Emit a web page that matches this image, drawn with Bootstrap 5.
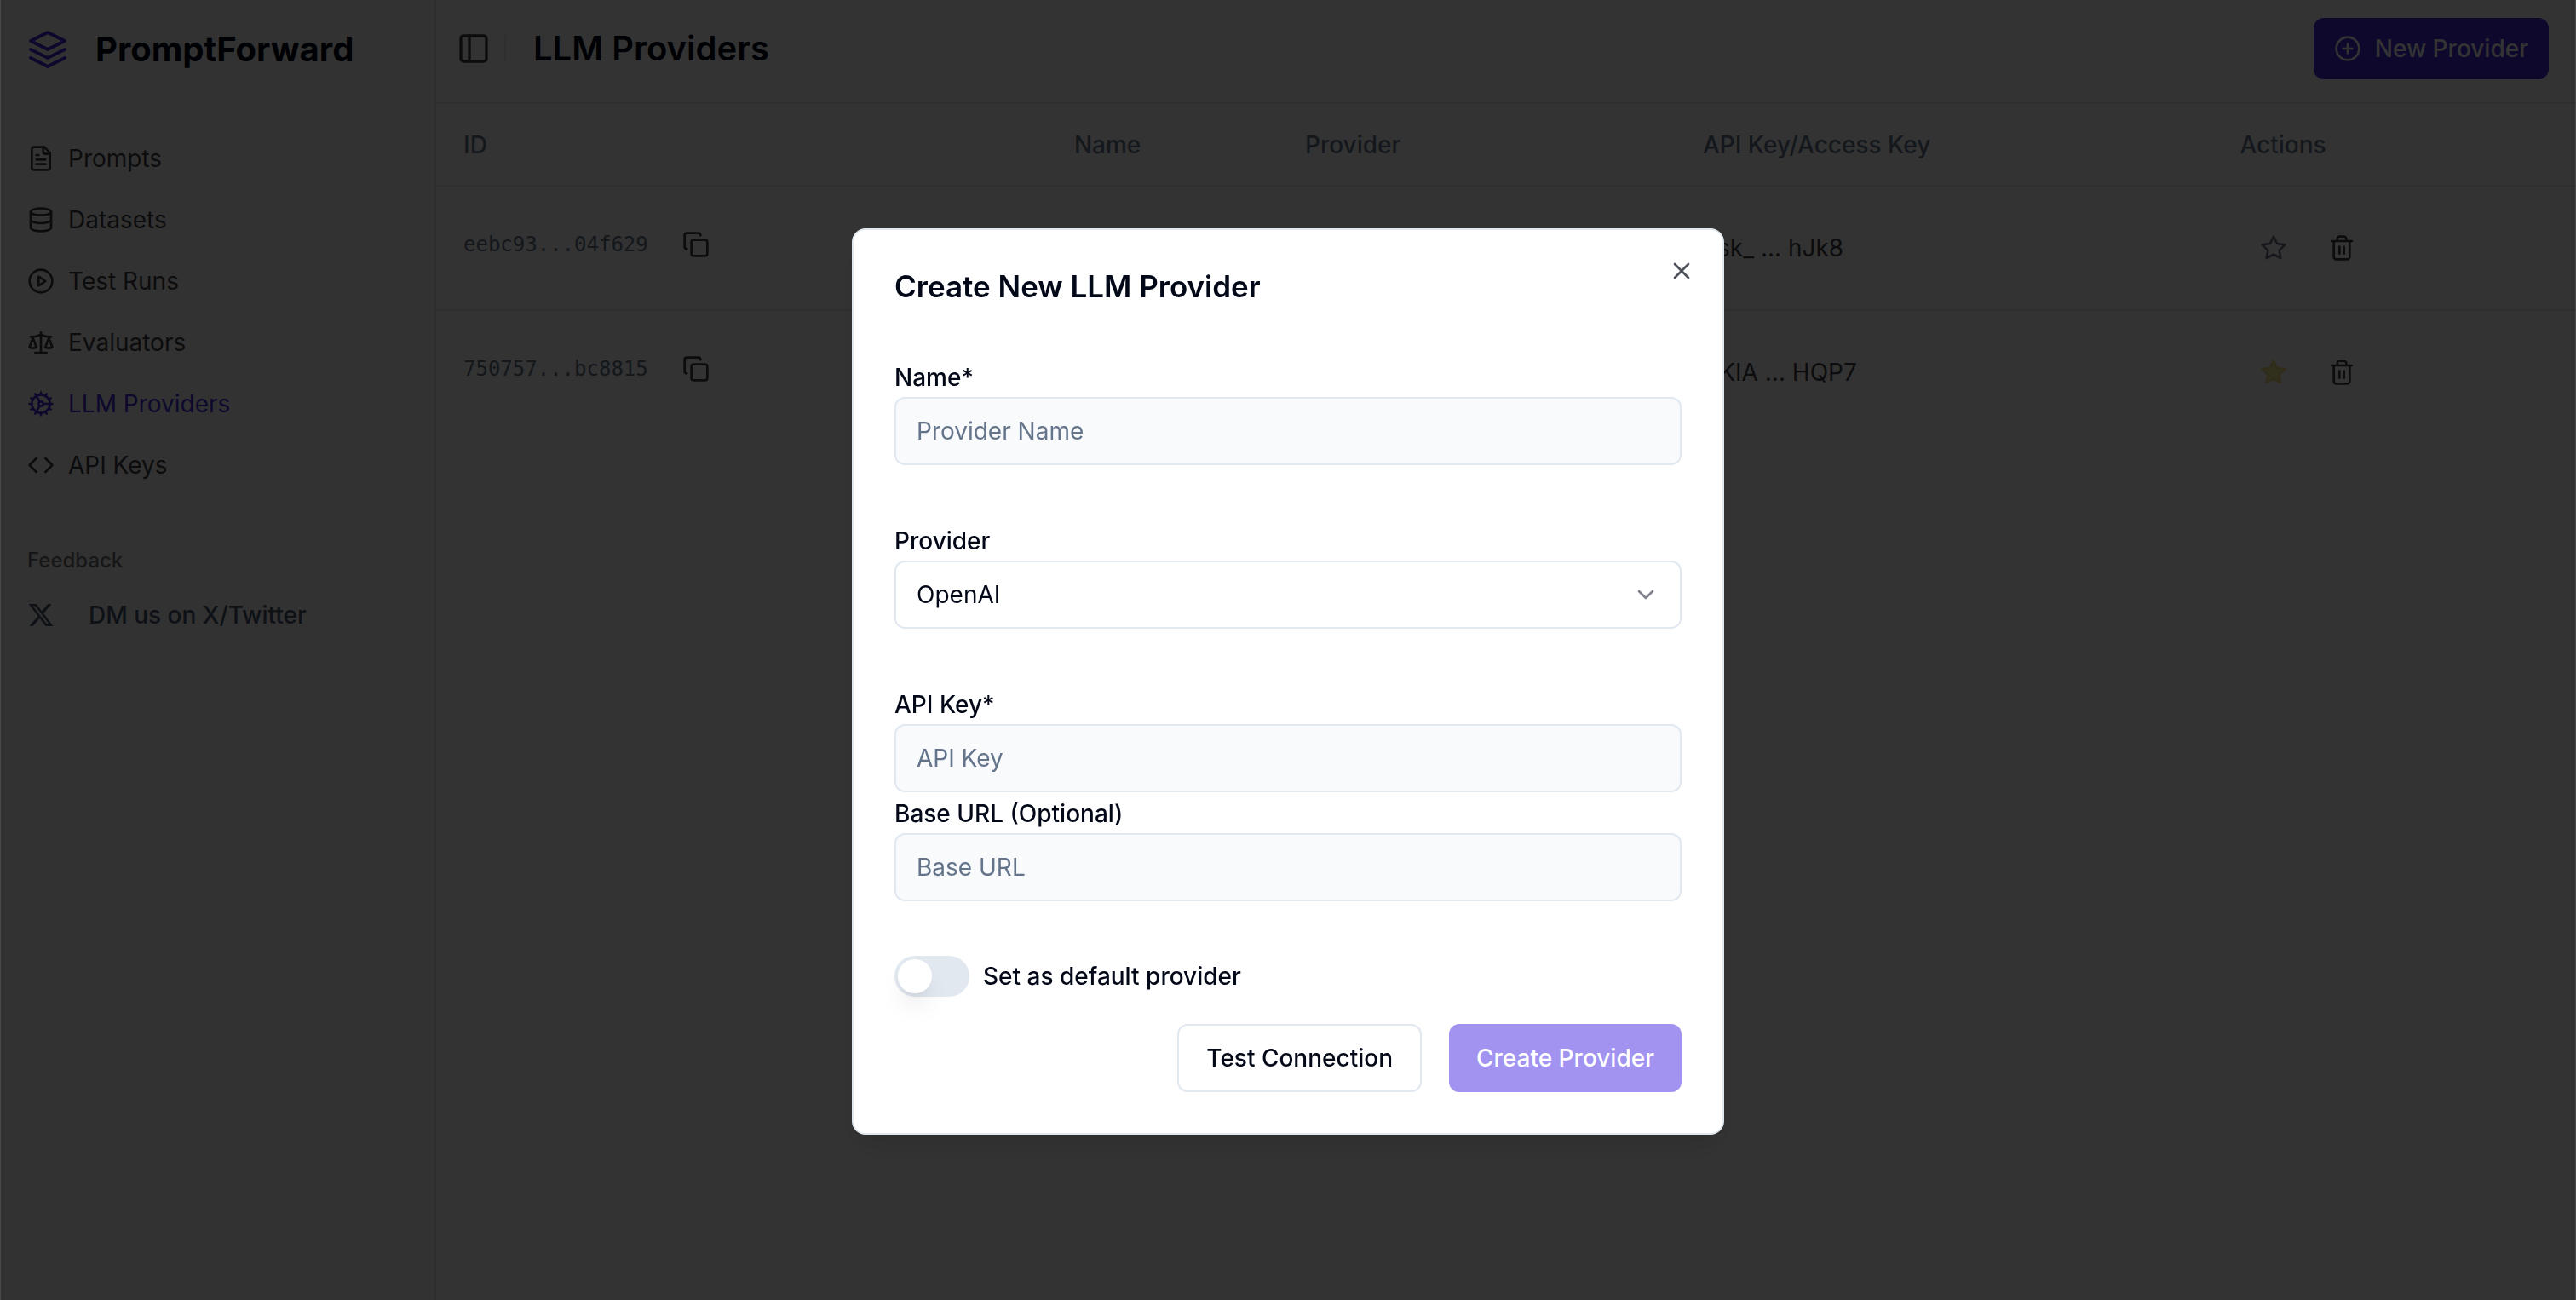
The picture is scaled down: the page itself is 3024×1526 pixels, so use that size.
<!DOCTYPE html>
<html lang="en">
<head>
<meta charset="utf-8">
<meta name="viewport" content="width=device-width, initial-scale=1">
<title>PromptForward – LLM Providers</title>
<link href="https://cdn.jsdelivr.net/npm/bootstrap@5.3.0/dist/css/bootstrap.min.css" rel="stylesheet">
<style>
  :root {
    --brand: #4529df;
    --ink: #020817;
    --muted: #64748b;
    --line: #e2e8f0;
    --side-ink: #3f3f46;
  }
  body { font-family: Inter, "Liberation Sans", sans-serif; font-size: 28px; line-height: 40px; color: var(--ink); background: #fff; }
  .ico { width: 32px; height: 32px; flex: none; fill: none; stroke: currentColor; stroke-width: 2; stroke-linecap: round; stroke-linejoin: round; }
  .ico-lg { width: 40px; height: 40px; }
  .ico-xl { width: 48px; height: 48px; }

  .app-side { width: 512px; background: #fafafa; border-right: 2px solid #e5e7eb; color: var(--side-ink); }
  .brand-row { height: 114px; padding: 2px 32px 0; gap: 32px; color: var(--brand); text-decoration: none; }
  .brand-name { font-size: 40px; font-weight: 700; color: var(--ink); }
  .side-nav { padding: 36px 0 0; }
  .side-nav .nav-link { height: 72px; padding: 0 32px; gap: 16px; color: var(--side-ink); }
  .side-nav .nav-link.active { color: var(--brand); }
  .side-caption { font-size: 24px; font-weight: 500; line-height: 32px; padding: 60px 32px 0; margin: 0; opacity: .7; }
  .side-nav-x { padding: 12px 0 0; }
  .side-nav-x .nav-link { height: 72px; padding: 0 32px; gap: 40px; font-weight: 500; color: #475569; }

  .top-bar { height: 122px; padding: 0 32px 6px 16px; border-bottom: 2px solid var(--line); }
  .top-bar .rule-v { width: 2px; height: 32px; background: var(--line); margin: 0 32px 0 8px; }
  .page-title { font-size: 40px; font-weight: 600; line-height: 48px; margin: 0; }
  .icon-btn { border: 0; background: none; display: inline-flex; align-items: center; justify-content: center; padding: 0; width: 80px; height: 80px; color: var(--side-ink); }
  .icon-btn.toggler { width: 56px; height: 56px; }
  .btn { font-size: 28px; font-weight: 500; line-height: 40px; border-radius: 12px; border-width: 2px; }
  .btn-new { height: 72px; padding: 0 22px; gap: 16px; }
  .btn-brand, .btn-brand:hover, .btn-brand:disabled { color: #fff; background: var(--brand); border-color: var(--brand); }
  .btn-brand:disabled { opacity: .5; }
  .btn-plain { color: var(--ink); background: #fff; border-color: var(--line); }
  .btn-form { height: 80px; padding: 0 32px; }
  .btn-form.btn-brand { padding: 0 30px; }

  .prov-table { table-layout: fixed; margin: 0; color: var(--side-ink); --bs-table-bg: transparent; }
  .prov-table th { height: 96px; padding: 0 32px; font-weight: 500; color: var(--muted); vertical-align: middle; border-bottom: 2px solid var(--line); }
  .prov-table td { height: 146px; padding: 0 32px; vertical-align: middle; color: var(--side-ink); border-bottom: 2px solid var(--line); }
  .prov-table tbody tr:last-child td { border-bottom-color: transparent; }
  .prov-table td.cell-id { padding-bottom: 8px; }
  .col-id { width: 28.54%; }
  .col-name { width: 10.79%; }
  .col-kind { width: 18.59%; }
  .col-key { width: 25.1%; }
  .id-text { font-family: "DejaVu Sans Mono", monospace; font-size: 24px; color: var(--muted); }
  .star-off { color: #6b7280; }
  .star-on { color: #eab308; opacity: .5; }
  .star-on .ico { fill: #e6e028; }

  .shade { position: fixed; inset: 0; background: rgba(0, 0, 0, .8); border: solid rgba(255, 255, 255, .1); border-width: 0 1px; }
  .dlg { position: relative; width: 1024px; max-width: 100%; margin: 268px auto 0; padding: 48px; background: #fff; border: 2px solid var(--line); border-radius: 16px; box-shadow: 0 20px 30px -6px rgba(0,0,0,.1), 0 8px 12px -8px rgba(0,0,0,.1); }
  .dlg-title { font-size: 35px; font-weight: 600; line-height: 36px; margin: 0; }
  .dlg-close { position: absolute; top: 32px; right: 32px; width: 32px; height: 32px; color: var(--ink); opacity: .7; }
  .dlg-group { padding-top: 64px; }
  .dlg-label { display: block; font-weight: 500; line-height: 46px; padding-top: 2px; margin: 0; }
  .switch-label { font-weight: 500; line-height: 48px; margin: 0; }
  .dlg .form-control, .dlg .form-select { height: 80px; padding: 0 24px; font-size: 28px; line-height: 40px; color: var(--ink); border: 2px solid var(--line); border-radius: 12px; background-color: #f8fafc; }
  .dlg .form-control::placeholder { color: var(--muted); opacity: 1; }
  .dlg .form-select { background: #fff url("data:image/svg+xml,%3Csvg xmlns='http://www.w3.org/2000/svg' viewBox='0 0 24 24' fill='none' stroke='%23020817' stroke-opacity='.5' stroke-width='2' stroke-linecap='round' stroke-linejoin='round'%3E%3Cpath d='m6 9 6 6 6-6'/%3E%3C/svg%3E") no-repeat right 24px center / 32px 32px; }
  .toggle-input { appearance: none; flex: none; width: 88px; height: 48px; margin: 0; padding: 4px; border-radius: 24px; background: var(--line); }
  .toggle-input::before { content: ""; display: block; width: 40px; height: 40px; border-radius: 50%; background: #fff; box-shadow: 0 20px 30px -6px rgba(0,0,0,.1), 0 8px 12px -8px rgba(0,0,0,.1); }
  .toggle-input:checked { background: var(--brand); }
  .toggle-input:checked::before { margin-left: 40px; }
  .dlg-actions { gap: 32px; padding-top: 32px; }
</style>
</head>
<body>
<div class="d-flex min-vh-100">
  <aside class="app-side flex-shrink-0">
    <a class="brand-row d-flex align-items-center" href="#">
      <svg class="ico ico-xl" viewBox="0 0 24 24"><path d="M12 2 2 7l10 5 10-5-10-5Z"/><path d="m2 12 10 5 10-5"/><path d="m2 17 10 5 10-5"/></svg>
      <span class="brand-name">PromptForward</span>
    </a>
    <nav class="side-nav nav flex-column">
      <a class="nav-link d-flex align-items-center" href="#"><svg class="ico" viewBox="0 0 24 24"><path d="M15 2H6a2 2 0 0 0-2 2v16a2 2 0 0 0 2 2h12a2 2 0 0 0 2-2V7Z"/><path d="M14 2v4a2 2 0 0 0 2 2h4M10 9H8M16 13H8M16 17H8"/></svg>Prompts</a>
      <a class="nav-link d-flex align-items-center" href="#"><svg class="ico" viewBox="0 0 24 24"><ellipse cx="12" cy="5" rx="9" ry="3"/><path d="M3 5v14a9 3 0 0 0 18 0V5"/><path d="M3 12a9 3 0 0 0 18 0"/></svg>Datasets</a>
      <a class="nav-link d-flex align-items-center" href="#"><svg class="ico" viewBox="0 0 24 24"><circle cx="12" cy="12" r="10"/><path d="m10 8 6 4-6 4Z"/></svg>Test Runs</a>
      <a class="nav-link d-flex align-items-center" href="#"><svg class="ico" viewBox="0 0 24 24"><path d="m16 16 3-8 3 8c-.87.65-1.92 1-3 1s-2.13-.35-3-1Z"/><path d="m2 16 3-8 3 8c-.87.65-1.92 1-3 1s-2.13-.35-3-1Z"/><path d="M7 21h10M12 3v18M3 7h2c2 0 5-1 7-2 2 1 5 2 7 2h2"/></svg>Evaluators</a>
      <a class="nav-link active d-flex align-items-center" href="#"><svg class="ico" viewBox="0 0 24 24"><path d="M12 20a8 8 0 1 0 0-16 8 8 0 0 0 0 16Z"/><path d="M12 14a2 2 0 1 0 0-4 2 2 0 0 0 0 4Z"/><path d="M12 2v2M12 22v-2M17 20.66l-1-1.73M11 10.27 7 3.34M20.66 17l-1.73-1M3.34 7l1.73 1M14 12h8M2 12h2M20.66 7l-1.73 1M3.34 17l1.73-1M17 3.34l-1 1.73M11 13.73l-4 6.93"/></svg>LLM Providers</a>
      <a class="nav-link d-flex align-items-center" href="#"><svg class="ico" viewBox="0 0 24 24"><path d="m16 18 6-6-6-6M8 6l-6 6 6 6"/></svg>API Keys</a>
    </nav>
    <p class="side-caption">Feedback</p>
    <nav class="side-nav-x nav flex-column">
      <a class="nav-link d-flex align-items-center" href="#"><svg class="ico" viewBox="0 0 24 24"><path fill="currentColor" stroke="none" d="M18.244 2.25h3.308l-7.227 8.26 8.502 11.24H16.17l-5.214-6.817L4.99 21.75H1.68l7.73-8.835L1.254 2.25H8.08l4.713 6.231zm-1.161 17.52h1.833L7.084 4.126H5.117z"/></svg>DM us on X/Twitter</a>
    </nav>
  </aside>

  <main class="flex-grow-1">
    <header class="top-bar d-flex align-items-center">
      <button class="icon-btn toggler" type="button" aria-label="Toggle sidebar"><svg class="ico ico-lg" viewBox="0 0 24 24"><rect x="3" y="3" width="18" height="18" rx="2"/><path d="M9 3v18"/></svg></button>
      <span class="rule-v"></span>
      <h1 class="page-title">LLM Providers</h1>
      <button class="btn btn-brand btn-new d-flex align-items-center ms-auto" type="button"><svg class="ico" viewBox="0 0 24 24"><circle cx="12" cy="12" r="10"/><path d="M8 12h8M12 8v8"/></svg>New Provider</button>
    </header>
    <table class="table prov-table">
      <colgroup><col class="col-id"><col class="col-name"><col class="col-kind"><col class="col-key"><col></colgroup>
      <thead><tr><th scope="col">ID</th><th scope="col">Name</th><th scope="col">Provider</th><th scope="col">API Key/Access Key</th><th scope="col">Actions</th></tr></thead>
      <tbody>
        <tr>
          <td class="cell-id"><div class="d-flex align-items-center gap-3"><span class="id-text">eebc93...04f629</span><button class="icon-btn" type="button" aria-label="Copy ID"><svg class="ico" viewBox="0 0 24 24"><rect x="8" y="8" width="14" height="14" rx="2"/><path d="M4 16c-1.1 0-2-.9-2-2V4c0-1.1.9-2 2-2h10c1.1 0 2 .9 2 2"/></svg></button></div></td>
          <td></td><td></td>
          <td>gsk_ ... hJk8</td>
          <td><div class="d-flex"><button class="icon-btn star-off" type="button" aria-label="Make default"><svg class="ico" viewBox="0 0 24 24"><path d="m12 2 3.09 6.26L22 9.27l-5 4.87 1.18 6.88L12 17.77l-6.18 3.25L7 14.14 2 9.27l6.91-1.01Z"/></svg></button><button class="icon-btn" type="button" aria-label="Delete"><svg class="ico" viewBox="0 0 24 24"><path d="M3 6h18M19 6v14c0 1-1 2-2 2H7c-1 0-2-1-2-2V6M8 6V4c0-1 1-2 2-2h4c1 0 2 1 2 2v2M10 11v6M14 11v6"/></svg></button></div></td>
        </tr>
        <tr>
          <td class="cell-id"><div class="d-flex align-items-center gap-3"><span class="id-text">750757...bc8815</span><button class="icon-btn" type="button" aria-label="Copy ID"><svg class="ico" viewBox="0 0 24 24"><rect x="8" y="8" width="14" height="14" rx="2"/><path d="M4 16c-1.1 0-2-.9-2-2V4c0-1.1.9-2 2-2h10c1.1 0 2 .9 2 2"/></svg></button></div></td>
          <td></td><td></td>
          <td>AKIA ... HQP7</td>
          <td><div class="d-flex"><button class="icon-btn star-on" type="button" aria-label="Default provider"><svg class="ico" viewBox="0 0 24 24"><path d="m12 2 3.09 6.26L22 9.27l-5 4.87 1.18 6.88L12 17.77l-6.18 3.25L7 14.14 2 9.27l6.91-1.01Z"/></svg></button><button class="icon-btn" type="button" aria-label="Delete"><svg class="ico" viewBox="0 0 24 24"><path d="M3 6h18M19 6v14c0 1-1 2-2 2H7c-1 0-2-1-2-2V6M8 6V4c0-1 1-2 2-2h4c1 0 2 1 2 2v2M10 11v6M14 11v6"/></svg></button></div></td>
        </tr>
      </tbody>
    </table>
  </main>
</div>

<div class="shade overflow-auto">
  <form class="dlg" role="dialog" aria-modal="true" aria-labelledby="dlgTitle">
    <h2 class="dlg-title" id="dlgTitle">Create New LLM Provider</h2>
    <button class="icon-btn dlg-close" type="button" aria-label="Close"><svg class="ico" viewBox="0 0 24 24"><path d="M18 6 6 18M6 6l12 12"/></svg></button>
    <div class="dlg-group">
      <label class="dlg-label" for="provName">Name*</label>
      <input class="form-control" id="provName" type="text" placeholder="Provider Name">
    </div>
    <div class="dlg-group">
      <label class="dlg-label" for="provKind">Provider</label>
      <select class="form-select" id="provKind"><option>OpenAI</option></select>
    </div>
    <div class="dlg-group">
      <label class="dlg-label" for="apiKey">API Key*</label>
      <input class="form-control" id="apiKey" type="text" placeholder="API Key">
      <label class="dlg-label" for="baseUrl">Base URL (Optional)</label>
      <input class="form-control" id="baseUrl" type="text" placeholder="Base URL">
    </div>
    <div class="dlg-group d-flex align-items-center gap-3">
      <input class="toggle-input" id="isDefault" type="checkbox" role="switch">
      <label class="switch-label" for="isDefault">Set as default provider</label>
    </div>
    <div class="dlg-actions d-flex justify-content-end">
      <button class="btn btn-plain btn-form" type="button">Test Connection</button>
      <button class="btn btn-brand btn-form" type="submit" disabled>Create Provider</button>
    </div>
  </form>
</div>
<script src="https://cdn.jsdelivr.net/npm/bootstrap@5.3.0/dist/js/bootstrap.bundle.min.js"></script>
</body>
</html>
